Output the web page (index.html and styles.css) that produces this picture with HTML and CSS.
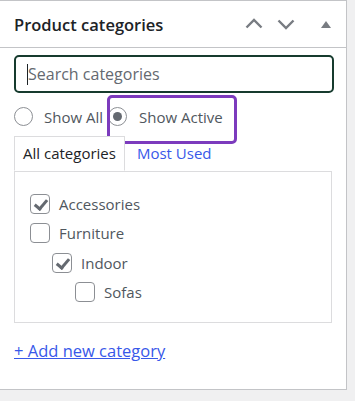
FILE: index.html
```html
<!DOCTYPE html>
<html lang="en">
<head>
<meta charset="UTF-8">
<title>Product categories</title>
<link rel="stylesheet" href="styles.css">
</head>
<body>
<div class="postbox">
    <div class="postbox-header">
        <h2>Product categories</h2>
        <div class="handles">
            <button class="handle" aria-label="Move up">
                <svg width="20" height="20" viewBox="0 0 20 20"><path d="M2.5 13.5 L10 6 L17.5 13.5" fill="none" stroke="#787c82" stroke-width="2.4"/></svg>
            </button>
            <button class="handle" aria-label="Move down">
                <svg width="20" height="20" viewBox="0 0 20 20"><path d="M2.5 6.5 L10 14 L17.5 6.5" fill="none" stroke="#787c82" stroke-width="2.4"/></svg>
            </button>
            <button class="handle toggle" aria-label="Toggle panel">
                <svg width="12" height="10" viewBox="0 0 12 10"><path d="M1 9 L6 2 L11 9 Z" fill="#787c82"/></svg>
            </button>
        </div>
    </div>
    <div class="inside">
        <div class="search-wrap">
            <input class="search" type="text" placeholder="Search categories">
            <span class="caret"></span>
        </div>
        <div class="filter">
            <label class="radio"><span class="dot"></span>Show All</label>
            <label class="radio active"><span class="dot checked"></span>Show Active</label>
            <span class="highlight"></span>
        </div>
        <ul class="tabs">
            <li class="tab current">All categories</li>
            <li class="tab"><a href="#">Most Used</a></li>
        </ul>
        <div class="tab-panel">
            <ul class="checklist">
                <li><span class="box checked"></span>Accessories</li>
                <li><span class="box"></span>Furniture</li>
                <li class="lvl1"><span class="box checked"></span>Indoor</li>
                <li class="lvl2"><span class="box"></span>Sofas</li>
            </ul>
        </div>
        <a class="add-new" href="#">+ Add new category</a>
    </div>
</div>
</body>
</html>
```

FILE: styles.css
```css
body{
    margin: 0;
    background-color: #f0f0f1;
    font-family: "Open Sans", "Noto Sans", sans-serif;
    color: #3c434a;
}
.postbox{
    width: 346px;
    height: 388px;
    background-color: #fff;
    border: 1px solid #c3c4c7;
    border-left: none;
}
.postbox-header{
    height: 46px;
    border-bottom: 1px solid #c3c4c7;
    display: flex;
    align-items: center;
    justify-content: space-between;
    padding-left: 14px;
}
.postbox-header h2{
    margin: 1px 0 0;
    font-size: 16.5px;
    font-weight: 600;
    color: #1d2327;
}
.handles{
    display: flex;
    align-items: center;
    margin-right: 2px;
}
.handle{
    border: none;
    background: none;
    padding: 0;
    width: 32px;
    height: 36px;
    display: flex;
    align-items: center;
    justify-content: center;
}
.handle.toggle{
    width: 36px;
    margin-left: 6px;
}
.inside{
    padding: 7px 13px 0 14px;
}
.search-wrap{
    position: relative;
}
.search{
    box-sizing: border-box;
    width: 320px;
    height: 38px;
    border: 2px solid #163b2e;
    border-radius: 5px;
    padding: 0 10px 0 12px;
    font-family: inherit;
    font-size: 16px;
    color: #2c3338;
    outline: none;
    display: block;
}
.search::placeholder{
    color: #646970;
}
.caret{
    position: absolute;
    left: 13px;
    top: 9px;
    width: 1px;
    height: 21px;
    background-color: #1d2327;
}
.filter{
    position: relative;
    display: flex;
    align-items: center;
    height: 41px;
    margin-top: 3px;
}
.radio{
    display: flex;
    align-items: center;
    font-size: 15px;
    color: #50575e;
    margin-right: 9px;
}
.radio.active{
    margin-left: -4px;
}
.active .dot{
    margin-right: 12px;
}
.dot{
    box-sizing: border-box;
    width: 19px;
    height: 19px;
    border: 1px solid #8c8f94;
    border-radius: 50%;
    margin-right: 11px;
    display: flex;
    align-items: center;
    justify-content: center;
}
.dot.checked::after{
    content: "";
    width: 9px;
    height: 9px;
    border-radius: 50%;
    background-color: #646970;
}
.highlight{
    position: absolute;
    left: 93px;
    top: -1px;
    width: 130px;
    height: 49px;
    border: 3px solid #7c3bbd;
    border-radius: 5px;
    box-sizing: border-box;
}
.tabs{
    list-style: none;
    margin: -1px 0 0;
    padding: 0;
    display: flex;
    height: 35px;
}
.tab{
    font-size: 15px;
    padding: 0 8px;
    display: flex;
    align-items: center;
    line-height: 1;
}
.tab.current{
    border: 1px solid #dcdcde;
    border-bottom: 1px solid #fff;
    background-color: #fff;
    color: #1d2327;
    position: relative;
    z-index: 1;
    height: 35px;
    box-sizing: border-box;
    margin-bottom: -1px;
}
.tab a{
    color: #3858e9;
    text-decoration: none;
    padding-left: 4px;
}
.tab-panel{
    box-sizing: border-box;
    width: 318px;
    height: 152px;
    border: 1px solid #dcdcde;
}
.checklist{
    list-style: none;
    margin: 0;
    padding: 17px 0 0 15px;
}
.checklist li{
    display: flex;
    align-items: center;
    height: 29.5px;
    font-size: 15px;
    color: #50575e;
}
.checklist .lvl1{
    padding-left: 22px;
}
.checklist .lvl2{
    padding-left: 45px;
}
.box{
    box-sizing: border-box;
    width: 20px;
    height: 20px;
    border: 1px solid #8c8f94;
    border-radius: 4px;
    margin-right: 9px;
    position: relative;
}
.box.checked::after{
    content: "";
    position: absolute;
    left: 6px;
    top: 2px;
    width: 5px;
    height: 10px;
    border: solid #646970;
    border-width: 0 3px 3px 0;
    transform: rotate(40deg);
}
.add-new{
    display: inline-block;
    margin-top: 16px;
    font-size: 16.5px;
    color: #3858e9;
}
```
